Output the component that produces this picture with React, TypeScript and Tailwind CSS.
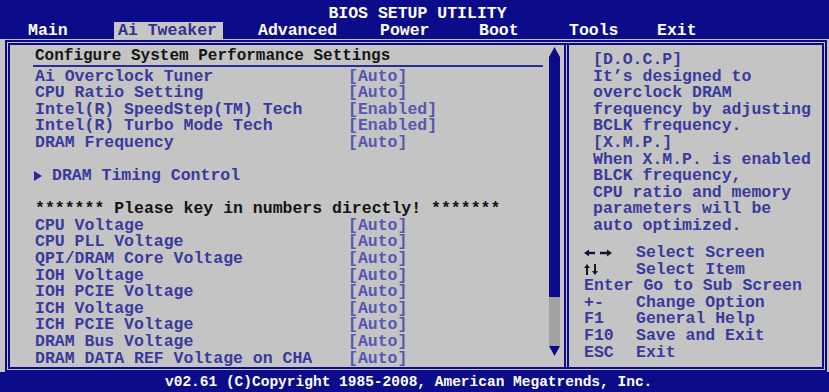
import React from "react"

const NAVY = "bg-[#0c0c8a]"

const topItems: [string, string][] = [
  ["Ai Overclock Tuner", "[Auto]"],
  ["CPU Ratio Setting", "[Auto]"],
  ["Intel(R) SpeedStep(TM) Tech", "[Enabled]"],
  ["Intel(R) Turbo Mode Tech", "[Enabled]"],
  ["DRAM Frequency", "[Auto]"],
]

const voltageItems: string[] = [
  "CPU Voltage",
  "CPU PLL Voltage",
  "QPI/DRAM Core Voltage",
  "IOH Voltage",
  "IOH PCIE Voltage",
  "ICH Voltage",
  "ICH PCIE Voltage",
  "DRAM Bus Voltage",
  "DRAM DATA REF Voltage on CHA",
]

const helpLines = [
  "[D.O.C.P]",
  "It’s designed to",
  "overclock DRAM",
  "frequency by adjusting",
  "BCLK frequency.",
  "[X.M.P.]",
  "When X.M.P. is enabled",
  "BLCK frequency,",
  "CPU ratio and memory",
  "parameters will be",
  "auto optimized.",
]

const LeftRight = () => (
  <svg width="28" height="8" viewBox="0 0 28 8" className="block">
    <path d="M0 4 L5 0.5 L5 2.8 L11 2.8 L11 5.2 L5 5.2 L5 7.5 Z" fill="#151530" />
    <path d="M28 4 L23 0.5 L23 2.8 L16 2.8 L16 5.2 L23 5.2 L23 7.5 Z" fill="#151530" />
  </svg>
)

const UpDown = () => (
  <svg width="14" height="11" viewBox="0 0 14 11" className="block">
    <path d="M3 0 L6 4 L4 4 L4 11 L2 11 L2 4 L0 4 Z" fill="#151530" />
    <path d="M11 11 L14 7 L12 7 L12 0 L10 0 L10 7 L8 7 Z" fill="#151530" />
  </svg>
)

const Row = ({ label, value }: { label: string; value: string }) => (
  <div className="flex">
    <span className="w-[313px] text-[#3a3a9c]">{label}</span>
    <span className="text-[#5757b3]">{value}</span>
  </div>
)

const KeyRow = ({ k, desc }: { k: React.ReactNode; desc: string }) => (
  <div className="flex items-center">
    <span className="w-[52px] flex items-center">{k}</span>
    <span>{desc}</span>
  </div>
)

export default function App() {
  return (
    <div className="w-[829px] h-[392px] flex flex-col bg-[#0c0c8a] font-['Liberation_Mono',monospace] font-bold overflow-hidden">
      {/* title + tabs */}
      <header className={`h-[39px] ${NAVY} text-white text-[16.5px] shrink-0`}>
        <div className="h-[22px] pt-[5px] leading-[17px] text-center pl-[6px]">BIOS SETUP UTILITY</div>
        <div className="flex h-[17px] leading-[17px] pl-[28px]">
          <span className="w-[86px]">Main</span>
          <span className="w-[109px] pl-[4px] bg-[#c6c6c6] text-[#30308f]">Ai Tweaker</span>
          <span className="w-[157px] pl-[35px]">Advanced</span>
          <span className="w-[99px]">Power</span>
          <span className="w-[90px]">Boot</span>
          <span className="w-[88px]">Tools</span>
          <span>Exit</span>
        </div>
      </header>

      {/* main frame */}
      <main className="flex-1 min-h-0 bg-[#c4c4c4] pt-[1px] pl-[5px] pr-[2px] flex">
        <div className="flex-1 flex border-[5px] border-double border-[#0c0c8a]">
          {/* settings list */}
          <section className="flex-1 flex">
            <div className="flex-1 pl-[25px] pr-[6px] text-[16.5px] leading-[16.6px]">
              <div className="pt-[2.5px] pb-[0.5px] text-[16px] leading-[17px] text-[#141414] border-b-2 border-[#2c2c96] -ml-[2px] pl-[2px]">
                Configure System Performance Settings
              </div>
              <div className="mt-[1.5px]">
                {topItems.map(([l, v]) => (
                  <Row key={l} label={l} value={v} />
                ))}
                <div className="h-[16.6px]" />
                <div className="flex items-center text-[#3a3a9c]">
                  <svg width="8" height="10" viewBox="0 0 8 10" className="-ml-[1px] mr-[10px]">
                    <path d="M0 0 L8 5 L0 10 Z" fill="#2828a0" />
                  </svg>
                  DRAM Timing Control
                </div>
                <div className="h-[16.6px]" />
                <div className="text-[#141414]">******* Please key in numbers directly! *******</div>
                {voltageItems.map((l) => (
                  <Row key={l} label={l} value="[Auto]" />
                ))}
              </div>
            </div>
            {/* scrollbar */}
            <div className="w-[11px] mr-[4px] mt-[2px] flex flex-col">
              <svg width="11" height="10" viewBox="0 0 11 10" className="block">
                <path d="M5.5 0 L11 10 L0 10 Z" fill="#0c0c8a" />
              </svg>
              <div className="h-[240px] bg-[#0c0c8a]" />
              <div className="h-[49px] bg-[#a2a2a2]" />
              <svg width="11" height="11" viewBox="0 0 11 11" className="block">
                <path d="M0 0 L11 0 L5.5 10 Z" fill="#0c0c8a" />
              </svg>
            </div>
          </section>

          {/* help panel */}
          <aside className="w-[258px] border-l-[5px] border-double border-[#0c0c8a] pl-[15px] pt-[7px] text-[16.5px] leading-[16.6px] text-[#3a3a9c]">
            <div className="pl-[9px]">
              {helpLines.map((t) => (
                <div key={t}>{t}</div>
              ))}
            </div>
            <div className="mt-[10.5px]">
              <KeyRow k={<LeftRight />} desc="Select Screen" />
              <KeyRow k={<UpDown />} desc="Select Item" />
              <div>Enter Go to Sub Screen</div>
              <KeyRow k="+-" desc="Change Option" />
              <KeyRow k="F1" desc="General Help" />
              <KeyRow k="F10" desc="Save and Exit" />
              <KeyRow k="ESC" desc="Exit" />
            </div>
          </aside>
        </div>
      </main>

      {/* footer */}
      <footer className={`h-[20px] ${NAVY} text-white text-[14.5px] leading-[20px] pl-[165px] shrink-0`}>
        v02.61 (C)Copyright 1985-2008, American Megatrends, Inc.
      </footer>
    </div>
  )
}
